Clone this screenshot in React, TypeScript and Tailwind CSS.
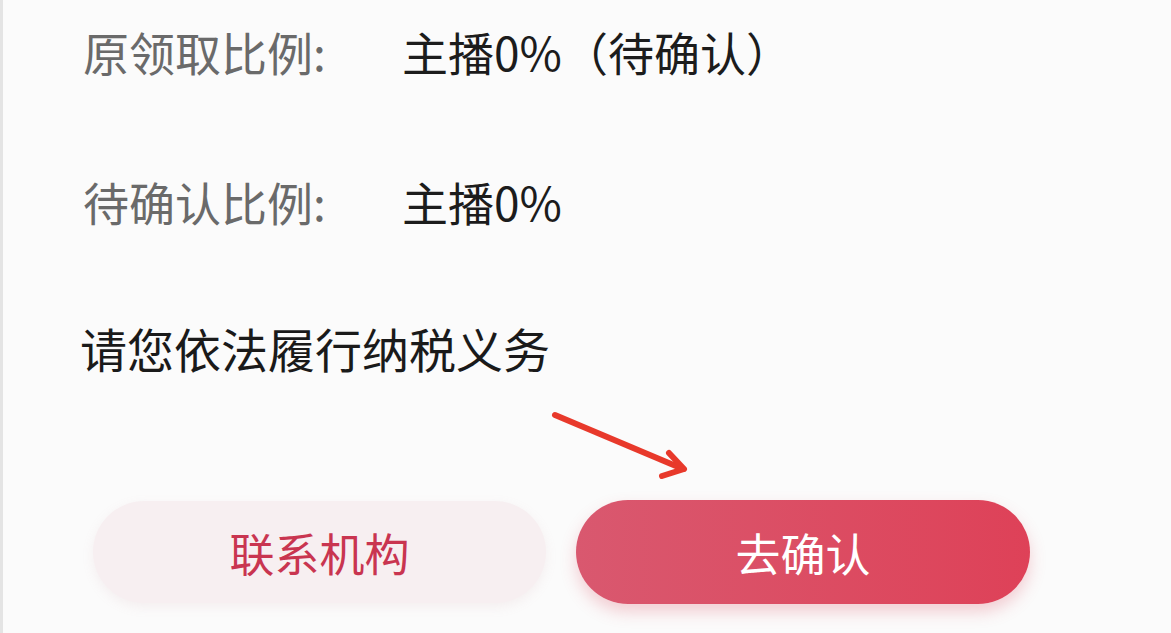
const Row = ({ label, value }: { label: string; value: string }) => (
  <div className="flex items-center h-[60px]">
    <span className="w-[319px] shrink-0 text-[#6a6a6a]">{label}</span>
    <span className="text-[#1c1c1c]">{value}</span>
  </div>
);

const Arrow = () => (
  <svg className="absolute left-[540px] top-[405px]" width="160" height="80" viewBox="0 0 160 80" fill="none">
    <path d="M12 10 L140 64" stroke="#e8392b" strokeWidth="6" strokeLinecap="round" />
    <path d="M126 48 L141 64 L119 71" stroke="#e8392b" strokeWidth="6" strokeLinecap="round" strokeLinejoin="round" />
  </svg>
);

export default function App() {
  return (
    <div
      className="relative w-full h-[633px] overflow-hidden bg-[#fbfbfb] border-l-[3px] border-[#e4e4e4] text-[46px] leading-none"
      style={{ fontFamily: '"Noto Sans CJK SC", "Noto Sans", sans-serif' }}
    >
      <div className="flex flex-col pl-[80px] pt-[21px]">
        <Row label="原领取比例:" value="主播0%（待确认）" />
        <div className="h-[90px]" />
        <Row label="待确认比例:" value="主播0%" />
        <div className="h-[86px]" />
        <div className="flex items-center h-[60px] -ml-[3px] text-[#1a1a1a] text-[47px]">请您依法履行纳税义务</div>
      </div>

      <div className="flex items-center gap-[30px] pl-[90px] mt-[123px] text-[45px]">
        <button className="w-[453px] h-[102px] rounded-full bg-[#f7eff1] text-[#c93550] shadow-[0_4px_12px_rgba(200,150,160,0.12)]">
          联系机构
        </button>
        <button className="w-[454px] h-[104px] rounded-full bg-gradient-to-r from-[#d9586f] to-[#de4158] text-white shadow-[0_8px_16px_rgba(220,70,90,0.25)]">
          去确认
        </button>
      </div>

      <Arrow />
    </div>
  );
}
